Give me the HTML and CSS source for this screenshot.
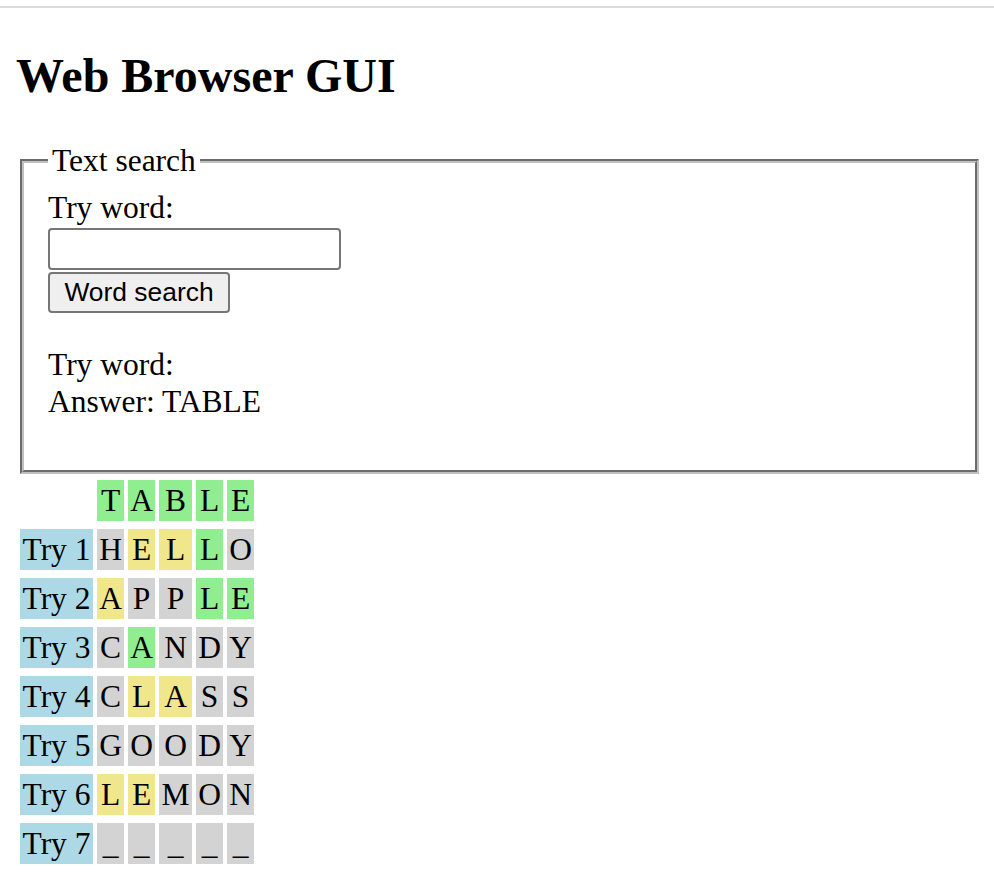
FILE: index.html
```html
<!DOCTYPE html>
<html lang="en">
<head>
<meta charset="utf-8">
<title>Web Browser GUI</title>
<link rel="stylesheet" href="styles.css">
</head>
<body>
<div class="topbar"></div>
<main class="page">
  <h1 class="title">Web Browser GUI</h1>
  <fieldset class="search">
    <legend class="search-legend">Text search</legend>
    <div class="search-body">
      <label class="field-label" for="word">Try word:</label>
      <input class="word-input" id="word" type="text">
      <button class="word-btn" type="button">Word search</button>
      <div class="result">
        <div class="result-line">Try word:</div>
        <div class="result-line">Answer: TABLE</div>
      </div>
    </div>
  </fieldset>
  <div class="board">
    <div class="cell empty"></div>
    <div class="cell g">T</div><div class="cell g">A</div><div class="cell g">B</div><div class="cell g">L</div><div class="cell g">E</div>

    <div class="cell lbl">Try 1</div>
    <div class="cell x">H</div><div class="cell y">E</div><div class="cell y">L</div><div class="cell g">L</div><div class="cell x">O</div>

    <div class="cell lbl">Try 2</div>
    <div class="cell y">A</div><div class="cell x">P</div><div class="cell x">P</div><div class="cell g">L</div><div class="cell g">E</div>

    <div class="cell lbl">Try 3</div>
    <div class="cell x">C</div><div class="cell g">A</div><div class="cell x">N</div><div class="cell x">D</div><div class="cell x">Y</div>

    <div class="cell lbl">Try 4</div>
    <div class="cell x">C</div><div class="cell y">L</div><div class="cell y">A</div><div class="cell x">S</div><div class="cell x">S</div>

    <div class="cell lbl">Try 5</div>
    <div class="cell x">G</div><div class="cell x">O</div><div class="cell x">O</div><div class="cell x">D</div><div class="cell x">Y</div>

    <div class="cell lbl">Try 6</div>
    <div class="cell y">L</div><div class="cell y">E</div><div class="cell x">M</div><div class="cell x">O</div><div class="cell x">N</div>

    <div class="cell lbl">Try 7</div>
    <div class="cell x">_</div><div class="cell x">_</div><div class="cell x">_</div><div class="cell x">_</div><div class="cell x">_</div>
  </div>
</main>
</body>
</html>
```

FILE: styles.css
```css
html, body {
  margin: 0;
  padding: 0;
  background: #ffffff;
}

body {
  font-family: "Liberation Serif", "Times New Roman", serif;
  font-size: 31.5px;
  color: #000000;
}

.topbar {
  height: 6px;
  border-bottom: 2px solid #dcdcdc;
}

.page {
  padding: 0 11px 0 16px;
}

.title {
  font-size: 48px;
  line-height: 55px;
  font-weight: bold;
  margin: 40px 0 39px;
}

.search {
  margin: 0 4px;
  padding: 9.5px 24px 50px 24px;
  border: 4px groove #c0c0c0;
  min-width: 0;
}

.search-legend {
  padding: 0 4px;
  line-height: 37px;
}

.search-body {
  display: flex;
  flex-direction: column;
  align-items: flex-start;
}

.field-label {
  line-height: 37px;
  margin-bottom: 2px;
}

.word-input {
  box-sizing: border-box;
  width: 293px;
  height: 42px;
  margin: 0 0 2px;
  padding: 2px 6px;
  border: 2px solid #767676;
  border-radius: 4px;
  background: #ffffff;
  font-family: "Liberation Sans", Arial, sans-serif;
  font-size: 26px;
}

.word-btn {
  box-sizing: border-box;
  width: 182px;
  height: 41px;
  margin: 0;
  padding: 0;
  border: 2px solid #767676;
  border-radius: 4px;
  background: #efefef;
  color: #000000;
  font-family: "Liberation Sans", Arial, sans-serif;
  font-size: 26.4px;
  line-height: 37px;
}

.result {
  margin-top: 33px;
}

.result-line {
  line-height: 37px;
}

.board {
  display: grid;
  grid-template-columns: 73px 27px 27px 33px 27px 27px;
  justify-content: start;
  column-gap: 4px;
  row-gap: 8px;
  margin: 6px 4px 0;
}

.cell {
  line-height: 36px;
  padding: 3px 0 2px;
  text-align: center;
  white-space: nowrap;
}

.g { background: #90ee90; }
.y { background: #f0e68c; }
.x { background: #d3d3d3; }
.lbl { background: #add8e6; }
```
